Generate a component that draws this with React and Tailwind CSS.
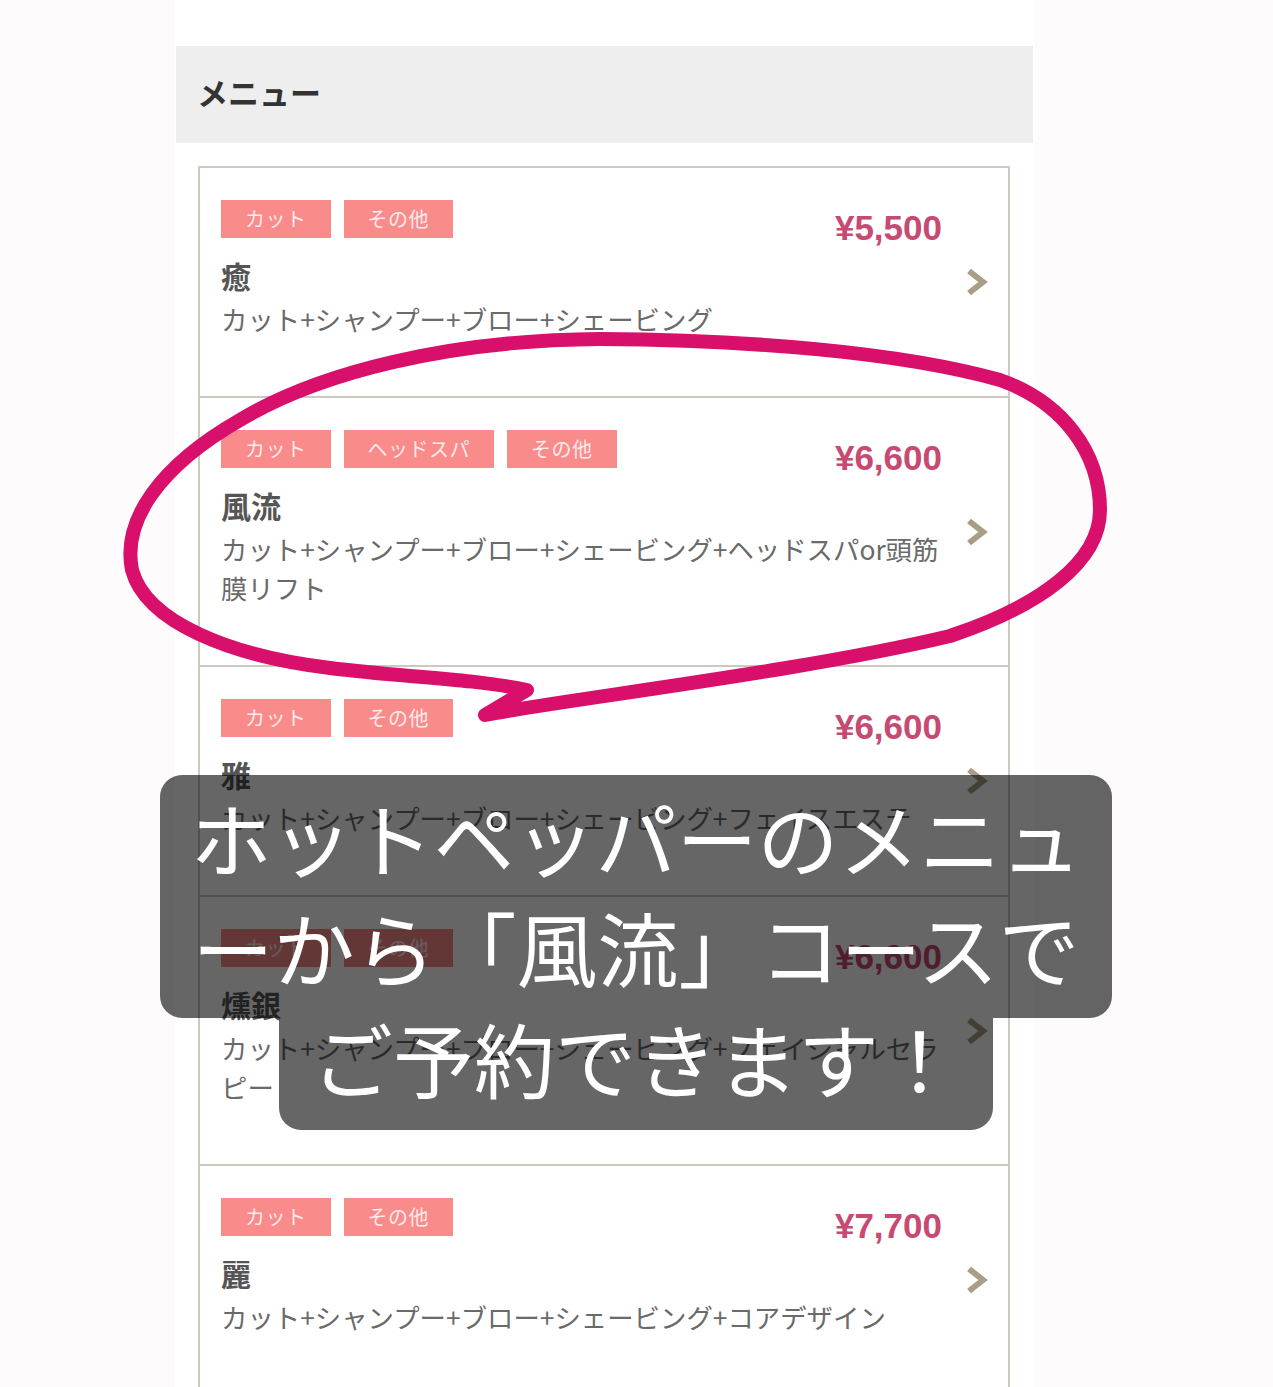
import React from 'react'

const items = [
  { tags: ['カット', 'その他'], price: '¥5,500', name: '癒', desc: 'カット+シャンプー+ブロー+シェービング' },
  { tags: ['カット', 'ヘッドスパ', 'その他'], price: '¥6,600', name: '風流', desc: 'カット+シャンプー+ブロー+シェービング+ヘッドスパor頭筋膜リフト' },
  { tags: ['カット', 'その他'], price: '¥6,600', name: '雅', desc: 'カット+シャンプー+ブロー+シェービング+フェイスエステ' },
  { tags: ['カット', 'その他'], price: '¥6,600', name: '燻銀', desc: 'カット+シャンプー+ブロー+シェービング+フェイシャルセラピー' },
  { tags: ['カット', 'その他'], price: '¥7,700', name: '麗', desc: 'カット+シャンプー+ブロー+シェービング+コアデザイン' },
]

const Chevron = () => (
  <svg width="22" height="28" viewBox="0 0 22 28" fill="none">
    <polyline points="3,3 17,14 3,25" stroke="#a89d85" strokeWidth="6" strokeLinejoin="miter" />
  </svg>
)

const MenuItem = ({ item, first }) => (
  <div className={`flex items-center ${first ? '' : 'border-t-2 border-[#cdc9c0]'}`}>
    <div className="w-[745px] pl-[21px] pt-[32px] pb-[58px]">
      <div className="flex h-[38px] items-start justify-between">
        <div className="flex gap-[13px]">
          {item.tags.map((t) => (
            <span
              key={t}
              className="flex h-[38px] items-center bg-[#fa8b8b] px-[24px] text-[20px] tracking-[0.5px] text-[#fdeaea]"
            >
              {t}
            </span>
          ))}
        </div>
        <span className="pr-[3px] pt-[8px] font-['Liberation_Sans',Arial,sans-serif] text-[35px] font-bold leading-[40px] text-[#c64a72]">
          {item.price}
        </span>
      </div>
      <div className="mt-[17px] text-[30px] font-bold leading-[40px] text-[#555555]">{item.name}</div>
      <p className="mt-[4px] text-[26.4px] leading-[39px] text-[#6a6a6a]">{item.desc}</p>
    </div>
    <div className="flex flex-1 justify-center">
      <Chevron />
    </div>
  </div>
)

export default function App() {
  return (
    <div className="relative h-[1387px] overflow-hidden bg-[#fdfbfb] font-['Noto_Sans_CJK_JP',sans-serif]">
      <div className="ml-[175px] min-h-full w-[860px] bg-white pt-[46px]">
        <div className="ml-[1px] flex h-[97px] w-[857px] items-center bg-[#eeeeee] pb-[5px] pl-[21px]">
          <h2 className="text-[31px] font-bold text-[#333333]">メニュー</h2>
        </div>
        <div className="ml-[23px] mt-[23px] w-[812px] border-2 border-[#cdc9c0]">
          {items.map((item, i) => (
            <MenuItem key={i} item={item} first={i === 0} />
          ))}
        </div>
      </div>

      {/* hand-drawn circle annotation */}
      <svg className="pointer-events-none absolute left-0 top-0" width="1273" height="1387" fill="none">
        <path
          d="M 485 715 C 560 700, 800 672, 950 636 C 1040 606, 1100 562, 1100 510 C 1100 452, 1062 402, 1000 380 C 900 352, 750 340, 600 339 C 450 340, 320 372, 240 420 C 160 466, 122 520, 132 570 C 146 622, 230 656, 330 668 C 400 677, 470 678, 527 690 L 485 715"
          stroke="#d80f6b"
          strokeWidth="14"
          strokeLinecap="round"
          strokeLinejoin="round"
        />
      </svg>

      {/* story caption */}
      <div className="absolute left-[160px] top-[775px] flex w-[952px] flex-col items-center text-[81px] text-white">
        <div className="w-[952px] rounded-[22px] bg-black/60 pt-[6px] text-center leading-[110px] whitespace-nowrap">
          <div>ホットペッパーのメニュ</div>
          <div className="h-[127px]">ーから「風流」コースで</div>
        </div>
        <div className="h-[112px] w-[714px] rounded-b-[22px] bg-black/60 text-center leading-[78px] whitespace-nowrap">
          ご予約できます！
        </div>
      </div>
    </div>
  )
}
